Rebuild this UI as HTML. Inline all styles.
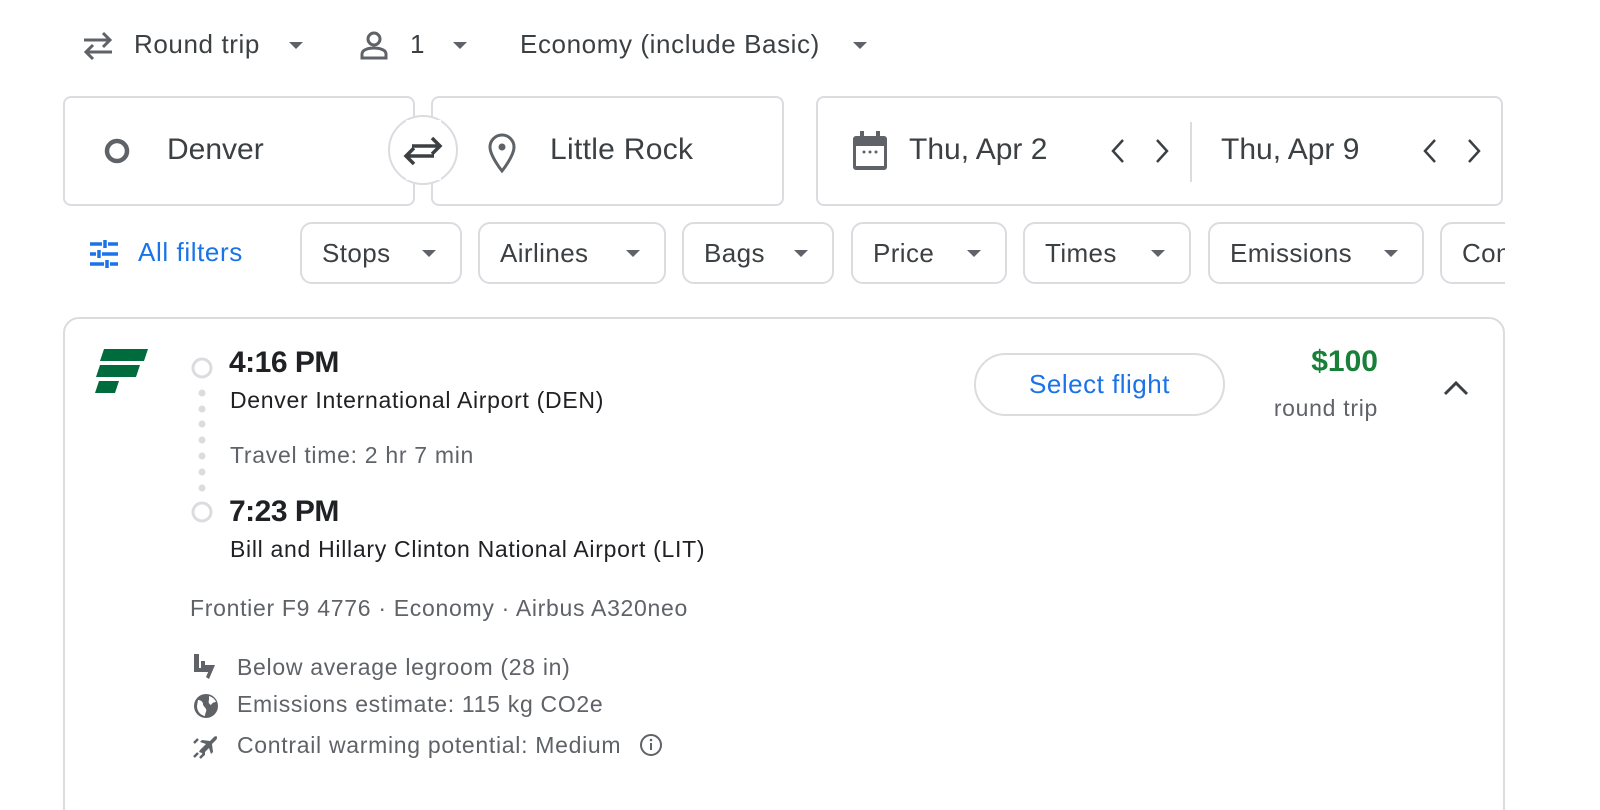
<!DOCTYPE html>
<html><head><meta charset="utf-8"><style>
*{margin:0;padding:0;box-sizing:border-box}
html,body{width:1600px;height:810px;overflow:hidden}
body{background:#fff;font-family:"Liberation Sans",Arial,sans-serif;color:#3c4043}
#w{position:relative;width:1600px;height:810px;overflow:hidden}
.a{position:absolute;white-space:nowrap}
.box{position:absolute;border:2px solid #dadce0;border-radius:8px;background:#fff}
.chip{position:absolute;top:222px;height:62px;border:2px solid #dadce0;border-radius:12px;font-size:26px;color:#3c4043;line-height:58px;padding-left:20px;letter-spacing:0.4px}
.tri{display:inline-block;width:0;height:0;border-left:7px solid transparent;border-right:7px solid transparent;border-top:7px solid #5f6368;vertical-align:middle}
.chip .tri{position:absolute;right:24px;top:26px}
.g{color:#5f6368}
.s{font-size:23px;letter-spacing:0.7px}
.t{font-size:26px;letter-spacing:0.6px}
</style></head><body><div id="w">
<svg class="a" style="left:80px;top:30px" width="36" height="32" viewBox="0 0 36 32" fill="none" stroke="#5f6368" stroke-width="3"><path d="M4 10H30M23 3l7 7-7 7"/><path d="M32 22H6M13 15l-7 7 7 7"/></svg>
<div class="a t" style="left:134px;top:29px">Round trip</div>
<span class="tri a" style="left:289px;top:42px"></span>
<svg class="a" style="left:358px;top:30px" width="32" height="30" viewBox="0 0 32 30" fill="none" stroke="#5f6368" stroke-width="3"><circle cx="16" cy="9" r="6"/><path d="M4 28v-4c0-4 6-6 12-6s12 2 12 6v4z"/></svg>
<div class="a t" style="left:410px;top:29px">1</div>
<span class="tri a" style="left:453px;top:42px"></span>
<div class="a t" style="left:520px;top:29px">Economy (include Basic)</div>
<span class="tri a" style="left:853px;top:42px"></span>
<div class="box" style="left:63px;top:96px;width:352px;height:110px"></div>
<div class="box" style="left:431px;top:96px;width:353px;height:110px"></div>
<div class="a" style="left:388px;top:115px;width:70px;height:70px;border:2px solid #dadce0;border-radius:50%;background:#fff"></div>
<div class="a" style="left:406px;top:120px;width:35px;height:60px;background:#fff"></div>
<svg class="a" style="left:402px;top:134px" width="42" height="34" viewBox="0 0 42 34" fill="none" stroke="#3c4043" stroke-width="3.5"><path d="M10 12H38M30 4l8 8-8 8"/><path d="M32 22H4M12 14l-8 8 8 8"/></svg>
<svg class="a" style="left:103px;top:137px" width="28" height="28"><circle cx="14" cy="14" r="10" fill="none" stroke="#5f6368" stroke-width="4.5"/></svg>
<div class="a" style="left:167px;top:133px;font-size:30px">Denver</div>
<svg class="a" style="left:486px;top:132px" width="32" height="42" viewBox="0 0 32 42" fill="none" stroke="#5f6368" stroke-width="3"><path d="M16 39C16 39 4 24 4 15a12 12 0 0124 0c0 9-12 24-12 24z"/><circle cx="16" cy="15" r="3.5" fill="#5f6368" stroke="none"/></svg>
<div class="a" style="left:550px;top:133px;font-size:30px;letter-spacing:0.3px">Little Rock</div>
<div class="box" style="left:816px;top:96px;width:687px;height:110px"></div>
<div class="a" style="left:1190px;top:122px;width:2px;height:60px;background:#dadce0"></div>
<svg class="a" style="left:852px;top:131px" width="36" height="40" viewBox="0 0 36 40"><rect x="1" y="5" width="34" height="34" rx="3" fill="#5f6368"/><rect x="4" y="15" width="28" height="20" fill="#fff"/><rect x="8" y="0" width="4" height="8" fill="#5f6368"/><rect x="24" y="0" width="4" height="8" fill="#5f6368"/><circle cx="12" cy="21" r="1.5" fill="#5f6368"/><circle cx="18" cy="21" r="1.5" fill="#5f6368"/><circle cx="24" cy="21" r="1.5" fill="#5f6368"/></svg>
<div class="a" style="left:909px;top:133px;font-size:30px">Thu, Apr 2</div>
<div class="a" style="left:1221px;top:133px;font-size:30px">Thu, Apr 9</div>
<svg class="a" style="left:1104px;top:136px" width="72" height="30" viewBox="0 0 72 30" fill="none" stroke="#3c4043" stroke-width="2.5"><path d="M19 4L9 15l10 11M53 4l10 11-10 11"/></svg>
<svg class="a" style="left:1416px;top:136px" width="72" height="30" viewBox="0 0 72 30" fill="none" stroke="#3c4043" stroke-width="2.5"><path d="M19 4L9 15l10 11M53 4l10 11-10 11"/></svg>
<svg class="a" style="left:89px;top:240px" width="30" height="28" viewBox="0 0 30 28" stroke="#1a73e8" stroke-width="3.5"><path d="M1 4h12M19 4h10M16 0v8M1 14h6M13 14h16M10 10v8M1 24h14M21 24h8M18 20v8"/></svg>
<div class="a t" style="left:138px;top:237px;color:#1a73e8">All filters</div>
<div class="chip" style="left:300px;width:162px">Stops<span class="tri"></span></div>
<div class="chip" style="left:478px;width:188px">Airlines<span class="tri"></span></div>
<div class="chip" style="left:682px;width:152px">Bags<span class="tri"></span></div>
<div class="chip" style="left:851px;width:156px">Price<span class="tri"></span></div>
<div class="chip" style="left:1023px;width:168px">Times<span class="tri"></span></div>
<div class="chip" style="left:1208px;width:216px">Emissions<span class="tri"></span></div>
<div class="chip" style="left:1440px;width:90px;border-right:none;border-radius:12px 0 0 12px;overflow:hidden">Connecting</div>
<div class="a" style="left:1505px;top:215px;width:95px;height:80px;background:#fff"></div>
<div class="box" style="left:63px;top:317px;width:1442px;height:520px;border-radius:16px"></div>
<svg class="a" style="left:95px;top:348px" width="54" height="46" viewBox="0 0 54 46" fill="#006b3c"><path d="M9 1H53L49 13H5z"/><path d="M5 17H45L41 29H1z"/><path d="M4 33H24L20 45H0z"/></svg>
<svg class="a" style="left:188px;top:354px" width="28" height="172"><circle cx="14" cy="14" r="9" fill="none" stroke="#dadce0" stroke-width="3"/><g fill="#dadce0"><circle cx="14" cy="39" r="3.5"/><circle cx="14" cy="55" r="3.5"/><circle cx="14" cy="70" r="3.5"/><circle cx="14" cy="86" r="3.5"/><circle cx="14" cy="102" r="3.5"/><circle cx="14" cy="118" r="3.5"/><circle cx="14" cy="134" r="3.5"/></g><circle cx="14" cy="158" r="9" fill="none" stroke="#dadce0" stroke-width="3"/></svg>
<div class="a" style="left:229px;top:346px;font-size:30px;font-weight:bold;color:#202124;letter-spacing:-0.5px">4:16 PM</div>
<div class="a s" style="left:230px;top:387px;color:#202124">Denver International Airport (DEN)</div>
<div class="a g s" style="left:230px;top:442px">Travel time: 2 hr 7 min</div>
<div class="a" style="left:229px;top:495px;font-size:30px;font-weight:bold;color:#202124;letter-spacing:-0.5px">7:23 PM</div>
<div class="a s" style="left:230px;top:536px;color:#202124">Bill and Hillary Clinton National Airport (LIT)</div>
<div class="a g s" style="left:190px;top:595px">Frontier F9 4776 · Economy · Airbus A320neo</div>
<svg class="a" style="left:193px;top:654px" width="26" height="26" viewBox="0 0 26 26" fill="#5f6368"><path d="M1 0h5v14h10v4H1z"/><path d="M8 7h4v4h10l-6 14-3-2 3-7H8z"/></svg>
<div class="a g s" style="left:237px;top:654px">Below average legroom (28 in)</div>
<svg class="a" style="left:192px;top:692px" width="28" height="28" viewBox="0 0 28 28"><circle cx="14" cy="14" r="12" fill="#5f6368"/><path d="M6 8c3 0 5 2 5 4s2 3 3 5-1 4-1 7c-5-1-8-5-8-10zM17 4c3 1 6 3 7 6-2 0-4 1-5 3-2-1-3-3-2-5z" fill="#fff"/></svg>
<div class="a g s" style="left:237px;top:691px">Emissions estimate: 115 kg CO2e</div>
<svg class="a" style="left:192px;top:731px" width="28" height="28" viewBox="0 0 28 28"><path d="M10 17l4-4-6-2 2-2 8 1 4-4c1-1 3-1 3 0s0 2-1 3l-4 4 1 8-2 2-2-6-4 4v3l-2 1-1-3-3-1 1-2z" fill="#5f6368"/><path d="M2 12l4-4M2 26l4-4M8 27l4-4" stroke="#5f6368" stroke-width="2.5"/></svg>
<div class="a g s" style="left:237px;top:732px">Contrail warming potential: Medium</div>
<svg class="a" style="left:639px;top:733px" width="24" height="24" viewBox="0 0 24 24"><circle cx="12" cy="12" r="10" fill="none" stroke="#5f6368" stroke-width="2"/><rect x="11" y="10" width="2" height="7" fill="#5f6368"/><circle cx="12" cy="7" r="1.3" fill="#5f6368"/></svg>
<div class="a" style="left:974px;top:353px;width:251px;height:63px;border:2px solid #dadce0;border-radius:32px;font-size:26px;color:#1a73e8;text-align:center;line-height:59px;letter-spacing:0.5px">Select flight</div>
<div class="a" style="left:1240px;top:345px;width:138px;text-align:right;font-size:30px;font-weight:bold;color:#188038">$100</div>
<div class="a g s" style="left:1230px;top:395px;width:148px;text-align:right">round trip</div>
<svg class="a" style="left:1441px;top:376px" width="30" height="22" viewBox="0 0 30 22" fill="none" stroke="#3c4043" stroke-width="3"><path d="M4 18L15 7l11 11"/></svg>
</div></body></html>
